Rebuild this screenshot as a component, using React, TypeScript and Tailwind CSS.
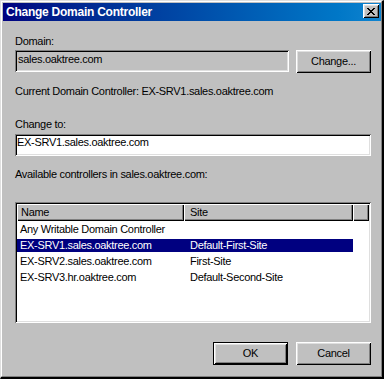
import React from "react";

const raised =
  "bg-[#c0c0c0] shadow-[inset_1px_1px_0_#ffffff,inset_-1px_-1px_0_#000000,inset_2px_2px_0_#dfdfdf,inset_-2px_-2px_0_#808080]";
const sunken =
  "shadow-[inset_1px_1px_0_#808080,inset_-1px_-1px_0_#ffffff,inset_2px_2px_0_#000000,inset_-2px_-2px_0_#dfdfdf]";
const headerCell =
  "bg-[#c0c0c0] shadow-[inset_1px_1px_0_#ffffff,inset_-1px_-1px_0_#000000,inset_-2px_-2px_0_#808080]";

const X_PIXELS = [
  "11000011",
  "01100110",
  "00111100",
  "00011000",
  "00111100",
  "01100110",
  "11000011",
];

function CloseGlyph() {
  const rects: React.ReactElement[] = [];
  X_PIXELS.forEach((row, y) =>
    row.split("").forEach((c, x) => {
      if (c === "1") rects.push(<rect key={`${x}-${y}`} x={x} y={y} width={1} height={1} fill="#000" />);
    })
  );
  return (
    <svg width="8" height="7" viewBox="0 0 8 7" shapeRendering="crispEdges">
      {rects}
    </svg>
  );
}

const rows = [
  { name: "Any Writable Domain Controller", site: "", sel: false },
  { name: "EX-SRV1.sales.oaktree.com", site: "Default-First-Site", sel: true },
  { name: "EX-SRV2.sales.oaktree.com", site: "First-Site", sel: false },
  { name: "EX-SRV3.hr.oaktree.com", site: "Default-Second-Site", sel: false },
];

export default function App() {
  return (
    <div className="w-[384px] h-[379px] overflow-hidden bg-[#c0c0c0] font-['Liberation_Sans',Arial,sans-serif] text-[11px] tracking-[-0.3px] text-black border-t border-l border-t-[#dfdfdf] border-l-[#dfdfdf] border-b-2 border-r-2 border-b-black border-r-black">
      <div className="h-full flex flex-col border-t border-l border-t-white border-l-white border-b border-r border-b-[#808080] border-r-[#808080] pt-px pl-px">
        {/* Title bar */}
        <div className="h-[18px] shrink-0 flex items-start bg-linear-to-r from-[#000080] to-[#1084d0]">
          <div className="flex-1 pl-[3px] h-[18px] leading-[18px] text-white font-bold text-[12px] tracking-[-0.25px]">
            Change Domain Controller
          </div>
          <div className={`mt-px mr-[2px] w-[16px] h-[14px] flex items-center justify-center ${raised}`}>
            <CloseGlyph />
          </div>
        </div>

        {/* Content */}
        <div className="flex-1 flex flex-col pl-[12px] pr-[10px]">
          <div className="mt-[14px] leading-[13px] h-[13px]">Domain:</div>
          <div className="mt-[2px] flex items-start gap-[7px]">
            <div className={`flex-1 h-[22px] bg-[#c0c0c0] ${sunken} px-[3px] pt-[3px]`}>
              <div className="leading-[13px]">sales.oaktree.com</div>
            </div>
            <div className={`w-[75px] h-[23px] flex items-center justify-center leading-[13px] ${raised}`}>
              Change...
            </div>
          </div>

          <div className="mt-[12px] leading-[13px] h-[13px]">
            Current Domain Controller: EX-SRV1.sales.oaktree.com
          </div>

          <div className="mt-[20px] leading-[13px] h-[13px]">Change to:</div>
          <div className={`mt-[3px] h-[22px] bg-white ${sunken} px-[2px] pt-[2px]`}>
            <div className="leading-[13px]">EX-SRV1.sales.oaktree.com</div>
          </div>

          <div className="mt-[12px] leading-[13px] h-[13px]">
            Available controllers in sales.oaktree.com:
          </div>

          {/* List view */}
          <div className={`mt-[21px] h-[121px] bg-white ${sunken} p-[2px] flex flex-col overflow-hidden`}>
            <div className="flex h-[17px] shrink-0">
              <div className={`w-[167px] h-[17px] leading-[17px] pl-[4px] ${headerCell}`}>Name</div>
              <div className={`w-[169px] h-[17px] leading-[17px] pl-[6px] ${headerCell}`}>Site</div>
              <div className={`flex-1 h-[17px] ${headerCell}`} />
            </div>
            {rows.map((r) => (
              <div key={r.name} className="h-[16px] pt-[2px]">
                <div
                  className={`flex w-[336px] h-[13px] leading-[13px] whitespace-nowrap ${
                    r.sel ? "bg-[#000080] text-white" : ""
                  }`}
                >
                  <div className="w-[167px] pl-[3px]">{r.name}</div>
                  <div className="w-[169px] pl-[6px]">{r.site}</div>
                </div>
              </div>
            ))}
          </div>

          {/* Buttons */}
          <div className="mt-[19px] flex justify-end gap-[8px]">
            <div className="w-[75px] h-[23px] border border-black">
              <div className={`w-full h-full flex items-center justify-center leading-[13px] ${raised}`}>OK</div>
            </div>
            <div className={`w-[75px] h-[23px] flex items-center justify-center leading-[13px] ${raised}`}>
              Cancel
            </div>
          </div>
        </div>
      </div>
    </div>
  );
}
